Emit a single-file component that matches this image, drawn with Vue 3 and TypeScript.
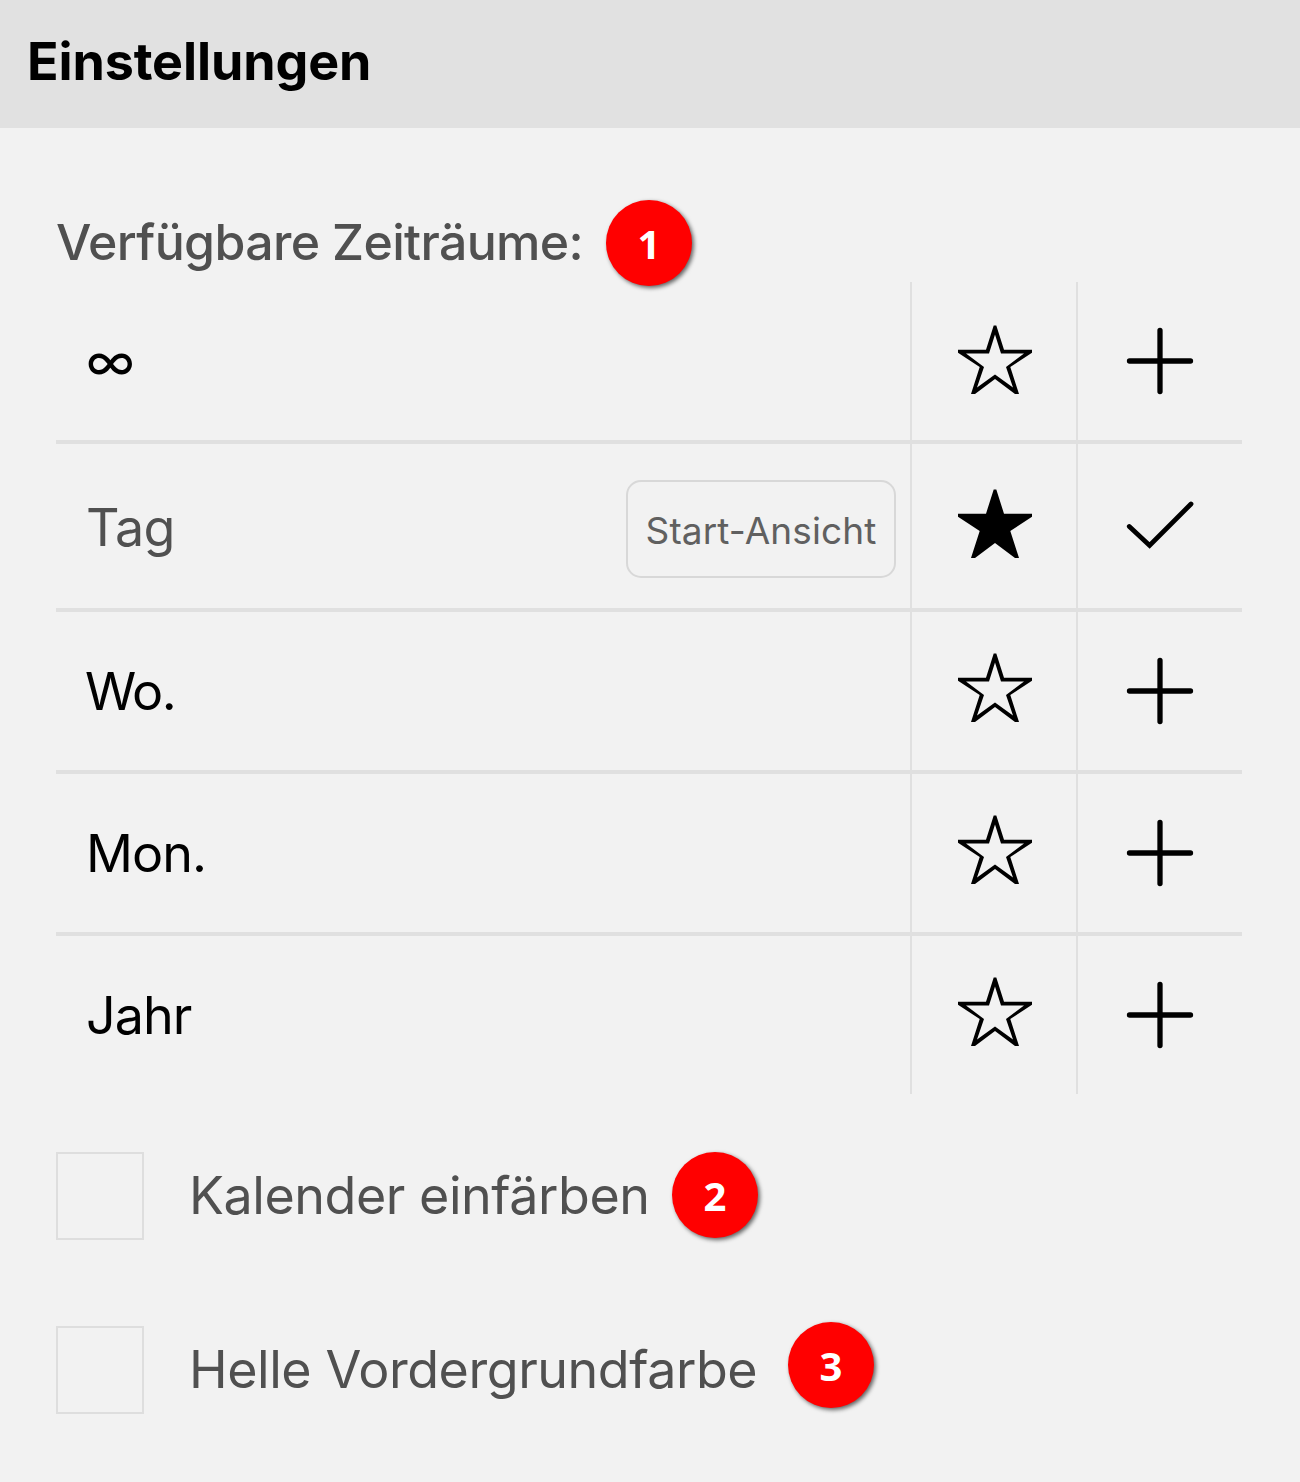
<script setup lang="ts">
interface Period {
  id: string
  label: string
  active?: boolean
  starTop: number
}

interface Option {
  id: string
  label: string
  badge: number
}

const periods: Period[] = [
  { id: 'all', label: '∞', starTop: 43 },
  { id: 'day', label: 'Tag', active: true, starTop: 45 },
  { id: 'week', label: 'Wo.', starTop: 41 },
  { id: 'month', label: 'Mon.', starTop: 41 },
  { id: 'year', label: 'Jahr', starTop: 41 },
]

const options: Option[] = [
  { id: 'tint', label: 'Kalender einfärben', badge: 2 },
  { id: 'light', label: 'Helle Vordergrundfarbe', badge: 3 },
]

const starOuter =
  'M35.7 .5H38.3L46 24.7H74V27.7L52.3 42L61 69H57L37 54L17 69H13L21.7 42L0 27.7V24.7H28Z'
const starInner = 'M37 9.5L31 28.5H8L26 42L19 62.5L37 49.5L55 62.5L48 42L66 28.5H43Z'
</script>

<template>
  <div class="panel">
    <header class="header"><h1 class="title">Einstellungen</h1></header>
    <main class="body">
      <div class="heading">
        <span class="heading-text">Verfügbare Zeiträume:</span>
        <span class="badge">1</span>
      </div>

      <div class="periods">
        <div v-for="p in periods" :key="p.id" class="row" :class="{ active: p.active }">
          <div class="name">
            <span class="label" :class="'label-' + p.id">{{ p.label }}</span>
            <span v-if="p.active" class="start">Start-Ansicht</span>
          </div>
          <div class="cell star-cell" :style="{ paddingTop: p.starTop + 'px' }">
            <svg width="74" height="70" viewBox="0 0 74 70">
              <path :d="p.active ? starOuter : starOuter + starInner" fill-rule="evenodd" />
            </svg>
          </div>
          <div class="cell">
            <svg v-if="p.active" width="68" height="68" viewBox="0 0 68 68" class="line">
              <path d="M3.3 34.5L23.6 53.5L65 12" />
            </svg>
            <svg v-else width="68" height="68" viewBox="0 0 68 68" class="line plus">
              <path d="M34 3.5V64.5M3.5 34H64.5" />
            </svg>
          </div>
        </div>
      </div>

      <div v-for="o in options" :key="o.id" class="option" :class="'option-' + o.id">
        <span class="box"></span>
        <span class="option-text">{{ o.label }}</span>
        <span class="badge">{{ o.badge }}</span>
      </div>
    </main>
  </div>
</template>

<style>
body {
  margin: 0;
  background: #f2f2f2;
}
</style>

<style scoped>
.panel {
  width: 1300px;
  height: 1482px;
  overflow: hidden;
  background: #f2f2f2;
  color: #000;
  font-family: Inter, 'Liberation Sans', sans-serif;
}
.header {
  box-sizing: border-box;
  height: 128px;
  padding: 0 27px;
  background: #e1e1e1;
}
.title {
  margin: 0;
  font-size: 52px;
  line-height: 124px;
  font-weight: 700;
  letter-spacing: -0.12px;
  white-space: nowrap;
}
.body {
  padding: 72px 58px 0 56px;
}
.heading {
  display: flex;
  height: 82px;
}
.heading-text {
  width: 550px;
  color: #505050;
  font-size: 50px;
  line-height: 85px;
  font-weight: 450;
  letter-spacing: -0.65px;
  white-space: nowrap;
}
.badge {
  flex: none;
  width: 86px;
  height: 86px;
  border-radius: 50%;
  background: #f00;
  color: #fff;
  box-shadow: 2px 2px 4px rgba(0, 0, 0, 0.6);
  font: 700 40px/87px 'Open Sans', 'Noto Sans', sans-serif;
  text-align: center;
}
.row {
  display: grid;
  grid-template-columns: 854px 166px 166px;
  height: 158px;
  border-bottom: 4px solid #e0e0e0;
}
.row:last-child {
  border-bottom: 0;
}
.row.active {
  height: 164px;
}
.name {
  display: flex;
  align-items: center;
  justify-content: space-between;
  padding: 0 14px 0 30px;
}
.label {
  padding-top: 2px;
  font-size: 52px;
  line-height: 64px;
  font-weight: 400;
  letter-spacing: -1px;
}
.label-week {
  margin-left: -1px;
  letter-spacing: -1.5px;
}
.active .label {
  padding-top: 4px;
  color: #505050;
  letter-spacing: -0.7px;
}
.start {
  box-sizing: border-box;
  width: 270px;
  height: 98px;
  margin-top: 6px;
  border: 2px solid #d8d8d8;
  border-radius: 15px;
  color: #606060;
  font-size: 37px;
  line-height: 97px;
  font-weight: 400;
  letter-spacing: 0.1px;
  text-align: center;
  white-space: nowrap;
}
.cell {
  box-sizing: border-box;
  display: flex;
  align-items: center;
  justify-content: center;
  border-left: 2px solid #e0e0e0;
}
.star-cell {
  align-items: flex-start;
  padding-left: 2px;
}
.cell svg {
  display: block;
}
.line {
  fill: none;
  stroke: #000;
  stroke-width: 4.8;
  stroke-linecap: round;
}
.plus {
  stroke-width: 5.3;
}
.option {
  display: flex;
  height: 88px;
}
.option-tint {
  margin: 58px 0 86px;
}
.box {
  box-sizing: border-box;
  flex: none;
  width: 88px;
  height: 88px;
  margin-right: 45px;
  border: 2px solid #dedede;
}
.option-text {
  width: 483px;
  color: #505050;
  font-size: 52px;
  line-height: 88px;
  font-weight: 400;
  letter-spacing: -0.45px;
  white-space: nowrap;
}
.option-light .option-text {
  width: 599px;
}
.option-light .badge {
  margin-top: -4px;
}
</style>
